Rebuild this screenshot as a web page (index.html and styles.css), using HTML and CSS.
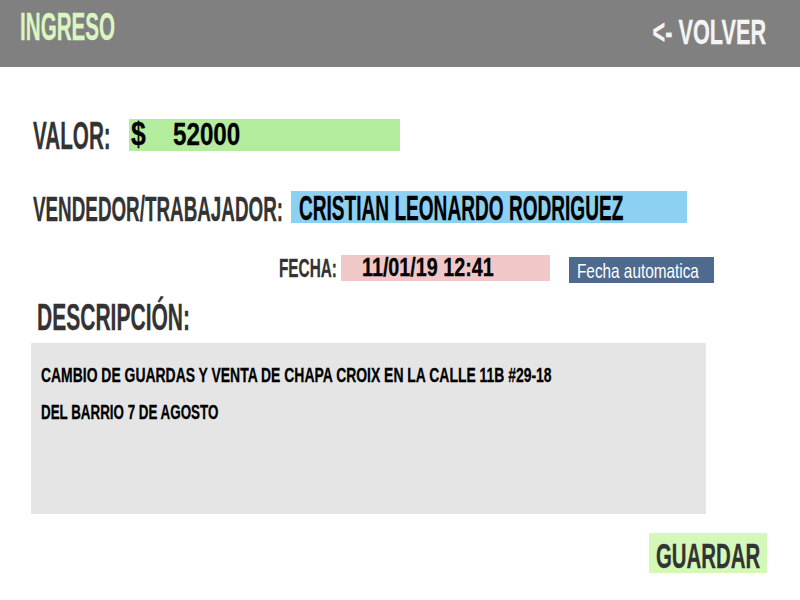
FILE: index.html
```html
<!DOCTYPE html>
<html lang="es">
<head>
<meta charset="utf-8">
<title>Ingreso</title>
<link rel="stylesheet" href="styles.css">
</head>
<body>
<header class="topbar">
  <div class="brand"><span class="sq s-brand">INGRESO</span></div>
  <a class="back" href="#"><span class="sq sq-r s-back">&lt;- VOLVER</span></a>
</header>
<main class="form">
  <div class="row row-valor">
    <div class="label label-valor"><span class="sq s-valor">VALOR:</span></div>
    <div class="field field-valor">
      <span class="cur"><span class="sq s-cur">$</span></span><span class="sq s-num">52000</span>
    </div>
  </div>
  <div class="row row-vend">
    <div class="label label-vend"><span class="sq s-vend">VENDEDOR/TRABAJADOR:</span></div>
    <div class="field field-vend"><span class="sq s-name">CRISTIAN LEONARDO RODRIGUEZ</span></div>
  </div>
  <div class="row row-fecha">
    <div class="label label-fecha"><span class="sq s-fecha">FECHA:</span></div>
    <div class="field field-fecha"><span class="sq s-date">11/01/19 12:41</span></div>
    <button class="auto-btn" type="button"><span class="sq s-auto">Fecha automatica</span></button>
  </div>
  <h2 class="desc-title"><span class="sq s-desc">DESCRIPCIÓN:</span></h2>
  <div class="desc-box">
    <div class="desc-line"><span class="sq s-line1">CAMBIO DE GUARDAS Y VENTA DE CHAPA CROIX EN LA CALLE 11B #29-18</span></div>
    <div class="desc-line"><span class="sq s-line2">DEL BARRIO 7 DE AGOSTO</span></div>
  </div>
  <div class="actions">
    <button class="save-btn" type="button"><span class="sq s-save">GUARDAR</span></button>
  </div>
</main>
</body>
</html>
```
FILE: styles.css
```css
* { box-sizing: border-box; }
html, body { margin: 0; padding: 0; }
body {
  width: 800px;
  height: 600px;
  background: #ffffff;
  color: #333333;
  font-family: "Liberation Sans", Arial, sans-serif;
  font-weight: 700;
}
.sq {
  display: inline-block;
  white-space: nowrap;
  transform-origin: 0 50%;
  transform: scaleX(var(--sx, 0.55));
  -webkit-text-stroke: 0.3px currentColor;
}
.sq-r { transform-origin: 100% 50%; }

/* header */
.topbar {
  height: 67px;
  background: #808080;
  display: flex;
  justify-content: space-between;
  align-items: flex-start;
}
.brand {
  margin: 8px 0 0 20px;
  font-size: 38px;
  line-height: 38px;
  color: #dbf6c2;
}
.back {
  margin: 14px 34px 0 0;
  font-size: 35px;
  line-height: 35px;
  color: #f4f4f4;
  text-decoration: none;
}
.s-brand { --sx: 0.543; }
.s-back { --sx: 0.62; }

/* form */
.form { display: flex; flex-direction: column; }
.row { display: flex; align-items: flex-start; }
.label { flex: none; white-space: nowrap; }
.field { flex: none; color: #000000; white-space: nowrap; }

.row-valor { margin-top: 49px; height: 39px; padding-left: 33px; }
.label-valor { width: 96px; font-size: 39px; line-height: 39px; }
.s-valor { --sx: 0.53; }
.field-valor {
  margin-top: 3px;
  width: 271px;
  height: 32px;
  background: #b3ec9c;
  padding-left: 2px;
  font-size: 31px;
  line-height: 29px;
}
.cur { display: inline-block; width: 42px; }
.s-cur { --sx: 0.78; font-size: 34px; }
.s-num { --sx: 0.78; }

.row-vend { margin-top: 36px; height: 35px; padding-left: 33px; }
.label-vend { width: 258px; font-size: 35px; line-height: 35px; }
.s-vend { --sx: 0.538; }
.field-vend {
  width: 396px;
  height: 32px;
  background: #8cd0f2;
  padding-left: 8px;
  font-size: 35px;
  line-height: 34px;
}
/* smaller font, stretched vertically about the baseline, so the unscaled box stays inside the field */
.s-name {
  font-size: 24px;
  line-height: 24px;
  transform-origin: 0 20.3px;
  transform: scale(0.795, 1.458);
  -webkit-text-stroke: 0.22px currentColor;
}

.row-fecha { margin-top: 29px; height: 28px; padding-left: 279px; }
.label-fecha { width: 62px; font-size: 26px; line-height: 26px; }
.s-fecha { --sx: 0.59; }
.field-fecha {
  width: 209px;
  height: 26px;
  background: #f0c8c8;
  padding-left: 21px;
  font-size: 25px;
  line-height: 24px;
}
.s-date { --sx: 0.79; }
.auto-btn {
  flex: none;
  margin: 2px 0 0 19px;
  width: 145px;
  height: 26px;
  border: 0;
  padding: 0 0 0 8px;
  background: #4e6a8e;
  color: #ffffff;
  text-align: left;
  font-family: "Liberation Sans", Arial, sans-serif;
  font-weight: 400;
  font-size: 21px;
  line-height: 21px;
  white-space: nowrap;
}
.s-auto { --sx: 0.73; -webkit-text-stroke: 0; }

.desc-title {
  margin: 17px 0 0 37px;
  height: 36px;
  font-size: 36px;
  line-height: 36px;
  font-weight: 700;
  white-space: nowrap;
}
.s-desc { --sx: 0.584; }

.desc-box {
  margin: 7px 0 0 31px;
  width: 675px;
  height: 171px;
  background: #e5e5e5;
  padding: 13px 0 0 10px;
  color: #000000;
}
.desc-line {
  font-size: 21px;
  line-height: 37px;
  height: 37px;
  white-space: nowrap;
}
.s-line1, .s-line2 {
  font-size: 14px;
  line-height: 14px;
  transform-origin: 0 11.85px;
  -webkit-text-stroke: 0.2px currentColor;
}
.s-line1 { transform: scale(0.995, 1.5); }
.s-line2 { transform: scale(0.955, 1.5); }

.actions {
  display: flex;
  justify-content: flex-end;
  padding-right: 33px;
  margin-top: 19px;
}
.save-btn {
  width: 118px;
  height: 40px;
  border: 0;
  background: #d4f8b8;
  color: #333333;
  padding: 5px 0 0 7px;
  text-align: left;
  font-family: "Liberation Sans", Arial, sans-serif;
  font-weight: 700;
  font-size: 35px;
  line-height: 35px;
  white-space: nowrap;
  align-self: flex-start;
}
.save-btn .sq { vertical-align: top; }
.s-save { --sx: 0.583; }
```
